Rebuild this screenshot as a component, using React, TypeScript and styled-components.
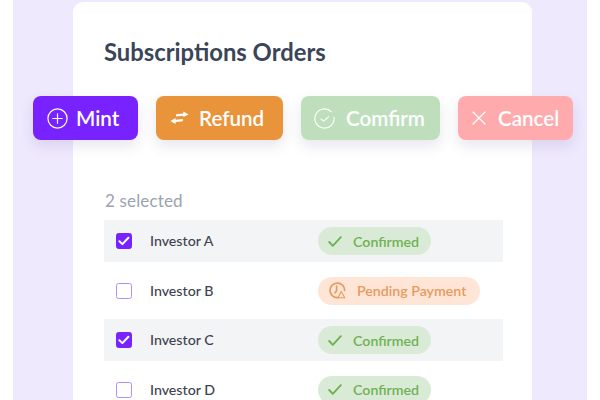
import styled, { createGlobalStyle } from 'styled-components'

const investors = [
    { name: 'Investor A', checked: true, status: 'confirmed' },
    { name: 'Investor B', checked: false, status: 'pending' },
    { name: 'Investor C', checked: true, status: 'confirmed' },
    { name: 'Investor D', checked: false, status: 'confirmed' },
]

export default function App() {
    return (
        <>
            <GlobalStyle />
            <Panel>
                <Card>
                    <Title>Subscriptions Orders</Title>
                    <Actions>
                        <ActionButton $bg="#7722ff" $width={105} $gap={8} $pad={14}>
                            <svg width="21" height="21" viewBox="0 0 21 21" fill="none" stroke="#fff" strokeWidth="1.2" strokeLinecap="round">
                                <circle cx="10.5" cy="10.5" r="9.6" />
                                <path d="M10.5 5.8v9.4M5.8 10.5h9.4" />
                            </svg>
                            Mint
                        </ActionButton>
                        <ActionButton $bg="#e9943b" $width={127} $gap={10} $pad={14}>
                            <svg width="19" height="14" viewBox="0 0 19 14" fill="#fff">
                                <path d="M6 3.2 L13.4 2.4 V0.4 L18.6 3.6 L13.4 6 V4.8 L6 5.4 Z" />
                                <path d="M12.8 8 L5.6 8.8 V7 L0.4 10 L5.6 13 V11 L12.8 10.2 Z" />
                            </svg>
                            Refund
                        </ActionButton>
                        <ActionButton $bg="#bfdfbc" $width={139} $gap={11} $pad={13}>
                            <svg width="21" height="21" viewBox="0 0 21 21" fill="none" stroke="#fff" strokeWidth="1.1" strokeLinecap="round" strokeLinejoin="round">
                                <path d="M17.4 3.8A9.6 9.6 0 1 0 20 9" />
                                <path d="M7 10.8l2.6 2.4 5-4.4" />
                            </svg>
                            Comfirm
                        </ActionButton>
                        <ActionButton $bg="#ffabae" $width={115} $gap={12} $pad={14}>
                            <svg width="14" height="14" viewBox="0 0 14 14" fill="none" stroke="#fff" strokeWidth="1.2" strokeLinecap="round">
                                <path d="M1 1l12 12M13 1L1 13" />
                            </svg>
                            Cancel
                        </ActionButton>
                    </Actions>
                    <Selected>2 selected</Selected>
                    <Rows>
                        {investors.map((inv) => (
                            <Row key={inv.name} $shaded={inv.checked}>
                                <Checkbox $checked={inv.checked}>
                                    {inv.checked && (
                                        <svg width="12" height="10" viewBox="0 0 12 10" fill="none" stroke="#fff" strokeWidth="2" strokeLinecap="round" strokeLinejoin="round">
                                            <path d="M1.4 5.2l3 2.9 6-6.4" />
                                        </svg>
                                    )}
                                </Checkbox>
                                <Name>{inv.name}</Name>
                                {inv.status === 'confirmed' ? (
                                    <Pill $bg="#d9ebd6" $color="#70b154" $width={113} $gap={11} $pad={10}>
                                        <svg width="14" height="11" viewBox="0 0 14 11" fill="none" stroke="#70b154" strokeWidth="1.9" strokeLinecap="round" strokeLinejoin="round">
                                            <path d="M1.2 6l3.6 3.8 8-8.6" />
                                        </svg>
                                        Confirmed
                                    </Pill>
                                ) : (
                                    <Pill $bg="#ffe5d5" $color="#e69a5f" $width={162} $gap={11} $pad={11}>
                                        <svg width="17" height="17" viewBox="0 0 17 17" fill="none" stroke="#e69a5f" strokeWidth="1.7" strokeLinecap="round" strokeLinejoin="round">
                                            <path d="M9 15.6A7.3 7.3 0 1 1 15.6 8.5" />
                                            <path d="M7.6 4.2v4.6l-1.6 2" />
                                            <path d="M12.2 9.4l3.6 6.4H9z" strokeWidth="1.1" />
                                        </svg>
                                        Pending Payment
                                    </Pill>
                                )}
                            </Row>
                        ))}
                    </Rows>
                </Card>
            </Panel>
        </>
    )
}

const GlobalStyle = createGlobalStyle`
    html, body {
        margin: 0;
        height: 400px;
        overflow: hidden;
        background: #fff;
        font-family: 'Lato', 'Liberation Sans', sans-serif;
    }
`

const Panel = styled.div`
    margin: 0 13px 0 13px;
    height: 400px;
    padding: 2px 55px 0 60px;
    box-sizing: border-box;
    background: #efe9fe;
    overflow: hidden;
`

const Card = styled.div`
    height: 398px;
    padding: 36px 29px 0 31px;
    box-sizing: border-box;
    background: #fff;
    border-radius: 10px 10px 0 0;
`

const Title = styled.h1`
    margin: 0;
    font-size: 23.8px;
    line-height: 29px;
    font-weight: 700;
    color: #3a4557;
`

const Actions = styled.div`
    display: flex;
    gap: 18px;
    margin: 29px 0 0 -71px;
    width: 540px;
`

const ActionButton = styled.div<{ $bg: string; $width: number; $gap: number; $pad: number }>`
    display: flex;
    align-items: center;
    flex: none;
    width: ${(p) => p.$width}px;
    height: 44px;
    padding-left: ${(p) => p.$pad}px;
    gap: ${(p) => p.$gap}px;
    box-sizing: border-box;
    background: ${(p) => p.$bg};
    border-radius: 8px;
    box-shadow: 0 6px 14px rgba(60, 50, 110, 0.12);
    color: #fff;
    font-size: 20.6px;
    font-weight: 600;
`

const Selected = styled.div`
    margin-top: 50px;
    padding-left: 1px;
    font-size: 17px;
    line-height: 21px;
    letter-spacing: 0.15px;
    color: #9aa3af;
`

const Rows = styled.div`
    display: grid;
    grid-template-rows: 42px 57px 42px 57px;
    margin-top: 9px;
`

const Row = styled.div<{ $shaded: boolean }>`
    display: flex;
    align-items: center;
    padding-left: 12px;
    background: ${(p) => (p.$shaded ? '#f3f4f6' : 'transparent')};
`

const Checkbox = styled.div<{ $checked: boolean }>`
    display: flex;
    align-items: center;
    justify-content: center;
    flex: none;
    width: 16px;
    height: 16px;
    box-sizing: border-box;
    border-radius: 2.5px;
    background: ${(p) => (p.$checked ? '#7722ff' : '#fff')};
    border: 1.3px solid ${(p) => (p.$checked ? '#7722ff' : '#b78cff')};
`

const Name = styled.div`
    flex: none;
    width: 168px;
    margin-left: 18px;
    margin-bottom: 1px;
    font-size: 14.2px;
    font-weight: 500;
    color: #3e4350;
`

const Pill = styled.div<{ $bg: string; $color: string; $width: number; $gap: number; $pad: number }>`
    display: flex;
    align-items: center;
    width: ${(p) => p.$width}px;
    height: 28px;
    padding-left: ${(p) => p.$pad}px;
    gap: ${(p) => p.$gap}px;
    box-sizing: border-box;
    border-radius: 14px;
    background: ${(p) => p.$bg};
    color: ${(p) => p.$color};
    font-size: 14.2px;
    font-weight: 600;
`
